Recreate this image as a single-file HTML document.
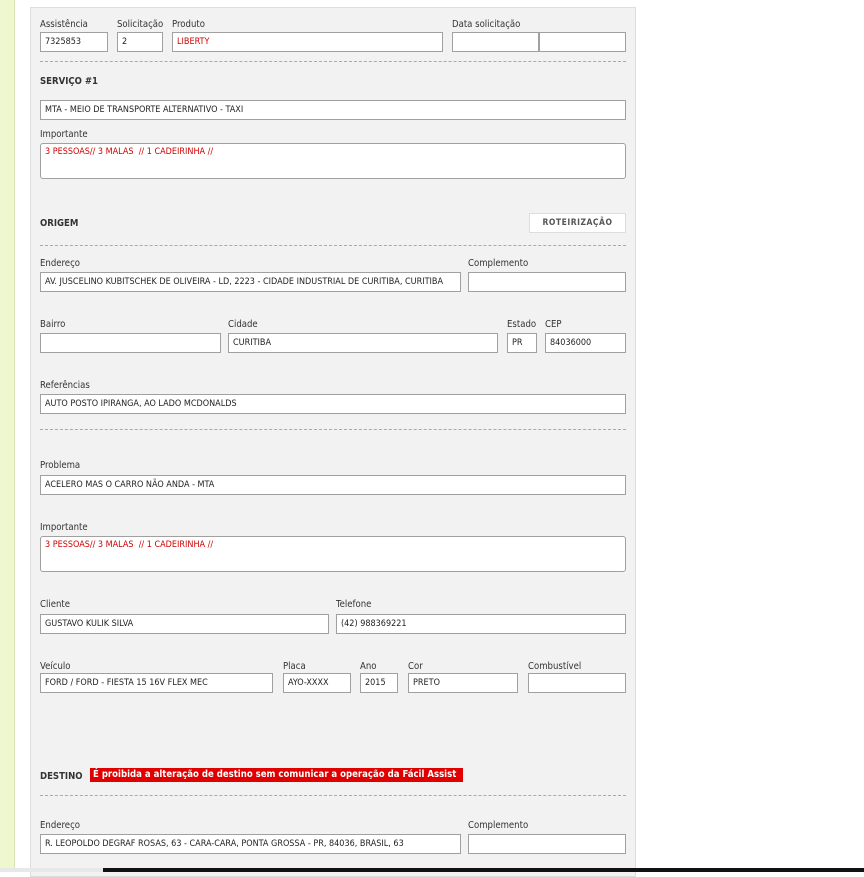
<!DOCTYPE html><html><head><meta charset="utf-8"><style>
*{box-sizing:border-box;margin:0;padding:0}
body{width:864px;height:872px;background:#fff;position:relative;overflow:hidden;font-family:Tahoma,"DejaVu Sans Condensed","Liberation Sans",sans-serif;font-size:9px;color:#333}
.a{position:absolute}
.l{position:absolute;font-size:9.5px;color:#333;white-space:nowrap;margin-top:1px}
.i{position:absolute;background:#fff;border:1px solid #a0a0a0;height:20px;font-size:9px;padding:0 0 0 4px;line-height:18px;white-space:nowrap;overflow:hidden;color:#222}
.t{position:absolute;background:#fff;border:1px solid #a0a0a0;border-radius:3px;height:36px;font-size:9px;padding:3px 4px;color:#d00000}
.r{color:#d00000}
.h{position:absolute;font-weight:bold;font-size:9.5px;color:#333;margin-top:1px}
.d{position:absolute;left:40px;width:586px;border-top:1px dashed #aaa;height:0}
</style></head><body>
<div class="a" style="left:0;top:0;width:15px;height:872px;background:#eef7cf;border-right:1px solid #d8e2b4"></div>
<div class="a" style="left:30px;top:7px;width:606px;height:870px;background:#f2f2f2;border:1px solid #ddd"></div>

<div class="l" style="left:40px;top:18px">Assistência</div>
<div class="l" style="left:117px;top:18px">Solicitação</div>
<div class="l" style="left:172px;top:18px">Produto</div>
<div class="l" style="left:452px;top:18px">Data solicitação</div>
<div class="i" style="left:40px;top:32px;width:68px">7325853</div>
<div class="i" style="left:117px;top:32px;width:46px">2</div>
<div class="i r" style="left:172px;top:32px;width:271px">LIBERTY</div>
<div class="i" style="left:452px;top:32px;width:87px"></div>
<div class="i" style="left:539px;top:32px;width:87px"></div>
<div class="d" style="top:61px"></div>

<div class="h" style="left:40px;top:75px">SERVIÇO #1</div>
<div class="i" style="left:40px;top:100px;width:586px">MTA - MEIO DE TRANSPORTE ALTERNATIVO - TAXI</div>
<div class="l" style="left:40px;top:128px">Importante</div>
<div class="t" style="left:40px;top:143px;width:586px">3 PESSOAS// 3 MALAS &nbsp;// 1 CADEIRINHA //</div>

<div class="h" style="left:40px;top:217px">ORIGEM</div>
<div class="a" style="left:529px;top:213px;width:97px;height:20px;background:#fff;border:1px solid #ddd;font-weight:bold;font-size:8.5px;color:#555;text-align:center;line-height:18px;letter-spacing:.5px">ROTEIRIZAÇÃO</div>
<div class="d" style="top:245px"></div>

<div class="l" style="left:40px;top:257px">Endereço</div>
<div class="l" style="left:468px;top:257px">Complemento</div>
<div class="i" style="left:40px;top:272px;width:421px">AV. JUSCELINO KUBITSCHEK DE OLIVEIRA - LD, 2223 - CIDADE INDUSTRIAL DE CURITIBA, CURITIBA</div>
<div class="i" style="left:468px;top:272px;width:158px"></div>

<div class="l" style="left:40px;top:318px">Bairro</div>
<div class="l" style="left:228px;top:318px">Cidade</div>
<div class="l" style="left:507px;top:318px">Estado</div>
<div class="l" style="left:545px;top:318px">CEP</div>
<div class="i" style="left:40px;top:333px;width:181px"></div>
<div class="i" style="left:228px;top:333px;width:270px">CURITIBA</div>
<div class="i" style="left:507px;top:333px;width:30px">PR</div>
<div class="i" style="left:545px;top:333px;width:81px">84036000</div>

<div class="l" style="left:40px;top:379px">Referências</div>
<div class="i" style="left:40px;top:394px;width:586px">AUTO POSTO IPIRANGA, AO LADO MCDONALDS</div>
<div class="d" style="top:429px"></div>

<div class="l" style="left:40px;top:459px">Problema</div>
<div class="i" style="left:40px;top:475px;width:586px">ACELERO MAS O CARRO NÃO ANDA - MTA</div>
<div class="l" style="left:40px;top:521px">Importante</div>
<div class="t" style="left:40px;top:536px;width:586px">3 PESSOAS// 3 MALAS &nbsp;// 1 CADEIRINHA //</div>

<div class="l" style="left:40px;top:598px">Cliente</div>
<div class="l" style="left:336px;top:598px">Telefone</div>
<div class="i" style="left:40px;top:614px;width:289px">GUSTAVO KULIK SILVA</div>
<div class="i" style="left:336px;top:614px;width:290px">(42) 988369221</div>

<div class="l" style="left:40px;top:660px">Veículo</div>
<div class="l" style="left:283px;top:660px">Placa</div>
<div class="l" style="left:360px;top:660px">Ano</div>
<div class="l" style="left:408px;top:660px">Cor</div>
<div class="l" style="left:528px;top:660px">Combustível</div>
<div class="i" style="left:40px;top:673px;width:233px">FORD / FORD - FIESTA 15 16V FLEX MEC</div>
<div class="i" style="left:283px;top:673px;width:68px">AYO-XXXX</div>
<div class="i" style="left:360px;top:673px;width:38px">2015</div>
<div class="i" style="left:408px;top:673px;width:110px">PRETO</div>
<div class="i" style="left:528px;top:673px;width:98px"></div>

<div class="h" style="left:40px;top:770px">DESTINO</div>
<div class="a" style="left:90px;top:768px;width:373px;height:14px;background:#e00000;color:#fff;font-weight:bold;font-size:9.5px;line-height:14px;padding-left:3px;white-space:nowrap">É proibida a alteração de destino sem comunicar a operação da Fácil Assist</div>
<div class="d" style="top:795px"></div>

<div class="l" style="left:40px;top:819px">Endereço</div>
<div class="l" style="left:468px;top:819px">Complemento</div>
<div class="i" style="left:40px;top:834px;width:421px">R. LEOPOLDO DEGRAF ROSAS, 63 - CARA-CARA, PONTA GROSSA - PR, 84036, BRASIL, 63</div>
<div class="i" style="left:468px;top:834px;width:158px"></div>

<div class="a" style="left:0;top:868px;width:103px;height:4px;background:#e8e8e8"></div>
<div class="a" style="left:103px;top:868px;width:761px;height:4px;background:#111"></div>
</body></html>
